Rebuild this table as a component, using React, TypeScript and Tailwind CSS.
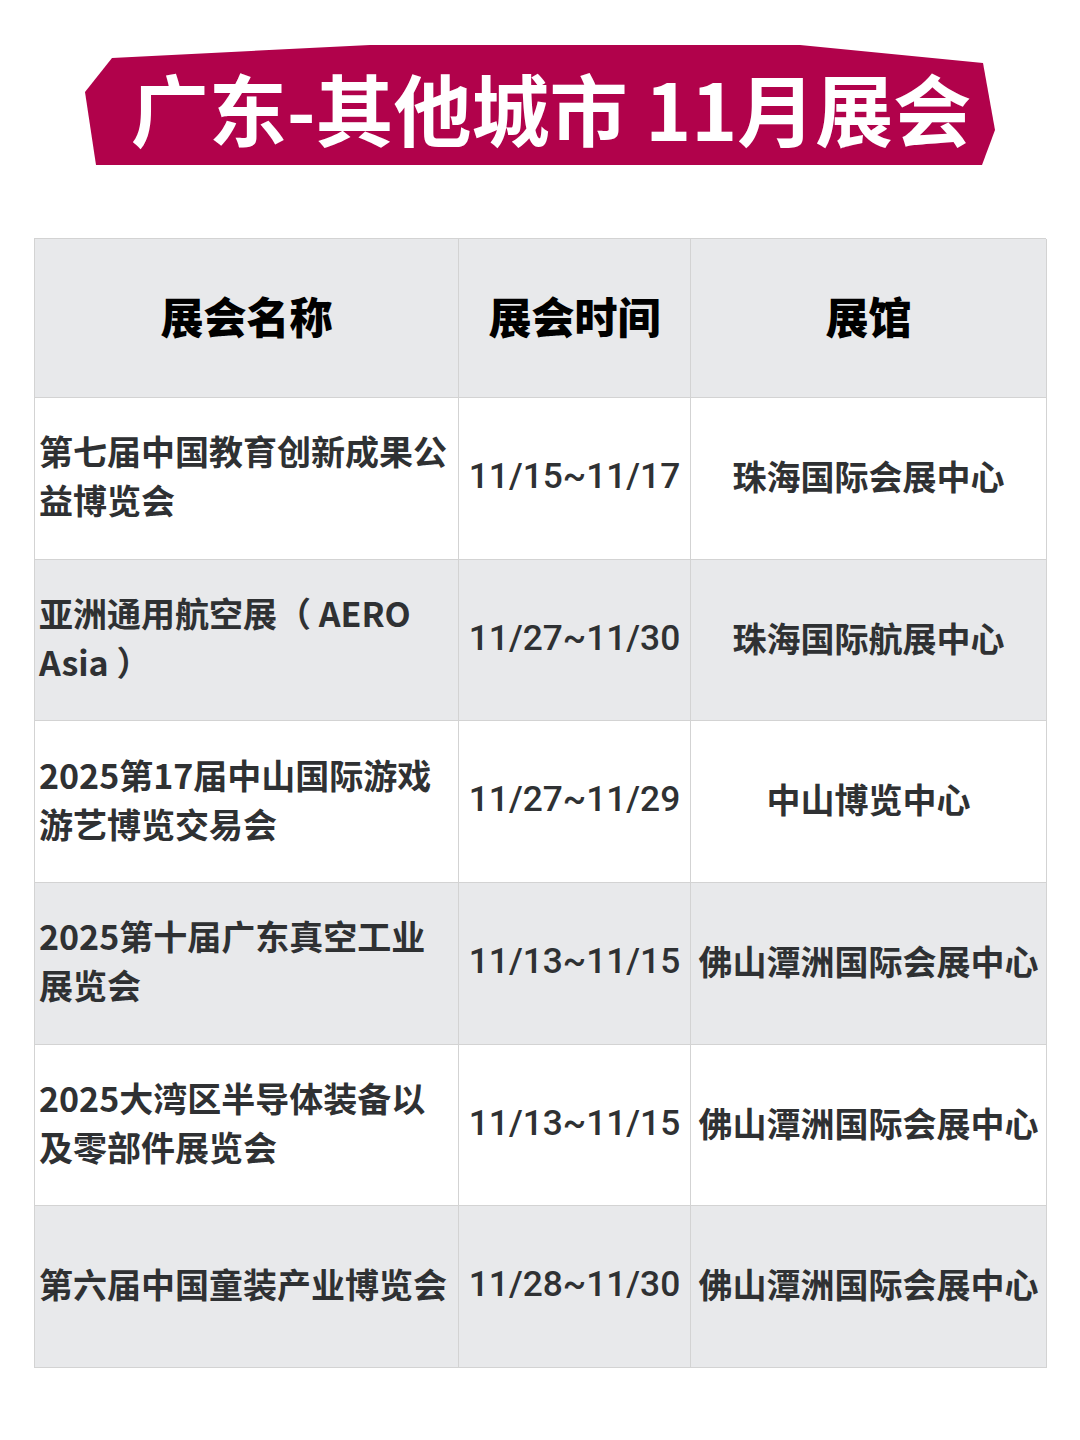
const ROWS = [
  { name: "第七届中国教育创新成果公益博览会", date: "11/15~11/17", venue: "珠海国际会展中心" },
  { name: "亚洲通用航空展（ AERO Asia ）", date: "11/27~11/30", venue: "珠海国际航展中心" },
  { name: "2025第17届中山国际游戏游艺博览交易会", date: "11/27~11/29", venue: "中山博览中心" },
  { name: "2025第十届广东真空工业展览会", date: "11/13~11/15", venue: "佛山潭洲国际会展中心" },
  { name: "2025大湾区半导体装备以及零部件展览会", date: "11/13~11/15", venue: "佛山潭洲国际会展中心" },
  { name: "第六届中国童装产业博览会", date: "11/28~11/30", venue: "佛山潭洲国际会展中心" },
];

const font = "font-['Noto_Sans_CJK_SC','Noto_Sans',sans-serif]";

export default function App() {
  return (
    <div className={`w-[1080px] h-[1440px] bg-white ${font}`}>
      <div className="pt-[44px] pl-[85px]">
        <div className="w-[910px] h-[122px] bg-[#b1024b] [clip-path:polygon(27px_14px,285px_1px,715px_1px,898px_19px,910px_86px,897px_121px,11px_121px,0px_48px)] flex items-center justify-center pl-[22px] pt-[4px]">
          <h1 className="text-white text-[78px] font-bold leading-none whitespace-nowrap">
            广东-其他城市 11月展会
          </h1>
        </div>
      </div>

      <div className="mt-[72px] ml-[34px] w-[1012px] border-l border-t border-[#d3d3d3]">
        <div className="grid grid-cols-[424px_232px_356px] h-[159px] bg-[#e8e9eb]">
          {["展会名称", "展会时间", "展馆"].map((h) => (
            <div key={h} className="flex items-center justify-center pb-[6px] border-r border-b border-[#d3d3d3] text-[43px] font-black text-black">
              {h}
            </div>
          ))}
        </div>
        {ROWS.map((r, i) => (
          <div
            key={i}
            className={`grid grid-cols-[424px_232px_356px] h-[161.7px] ${i % 2 === 0 ? "bg-white" : "bg-[#e8e9eb]"} text-[#2f3133] text-[34px] font-bold`}
          >
            <div className="flex items-center pl-[4px] pr-[8px] pb-[6px] border-r border-b border-[#d3d3d3] leading-[49px]">
              <span>{r.name}</span>
            </div>
            <div className="flex items-center justify-center pb-[4px] border-r border-b border-[#d3d3d3] whitespace-nowrap font-['Roboto',sans-serif] font-medium text-[35.3px]">
              {r.date}
            </div>
            <div className="flex items-center justify-center pb-[6px] border-r border-b border-[#d3d3d3] whitespace-nowrap">
              {r.venue}
            </div>
          </div>
        ))}
      </div>
    </div>
  );
}
